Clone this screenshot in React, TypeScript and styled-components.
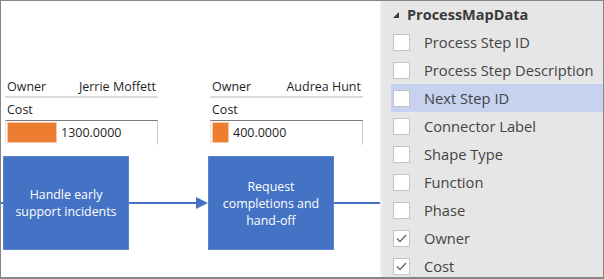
import styled, { createGlobalStyle } from 'styled-components';

const GlobalStyle = createGlobalStyle`
  html, body {
    margin: 0;
    padding: 0;
    background: #ffffff;
  }
  body {
    font-family: 'Open Sans', 'Noto Sans', sans-serif;
  }
`;

const BLUE = '#4472c4';

interface IStep {
  owner: string;
  cost: number;
  lines: string[];
}

const steps: IStep[] = [
  { owner: 'Jerrie Moffett', cost: 1300, lines: ['Handle early', 'support incidents'] },
  { owner: 'Audrea Hunt', cost: 400, lines: ['Request', 'completions and', 'hand-off'] }
];

const fields = [
  { label: 'Process Step ID', checked: false },
  { label: 'Process Step Description', checked: false },
  { label: 'Next Step ID', checked: false, selected: true },
  { label: 'Connector Label', checked: false },
  { label: 'Shape Type', checked: false },
  { label: 'Function', checked: false },
  { label: 'Phase', checked: false },
  { label: 'Owner', checked: true },
  { label: 'Cost', checked: true }
];

function DataGraphic({ step }: { step: IStep }) {
  // bar scaled against the largest cost in the map
  const barWidth = Math.round((step.cost / 1300) * 48);
  return (
    <StyledDataGraphic>
      <div className="owner-row">
        <span>Owner</span>
        <span>{step.owner}</span>
      </div>
      <div className="cost-label">Cost</div>
      <div className="cost-box">
        <div className="bar" style={{ width: barWidth }} />
        <span>{step.cost.toFixed(4)}</span>
      </div>
    </StyledDataGraphic>
  );
}

function Arrow() {
  return (
    <StyledConnector width="79" height="14" viewBox="0 0 79 14">
      <line x1="0" y1="7" x2="68" y2="7" stroke={BLUE} strokeWidth="2" />
      <polygon points="67,1 79,7 67,13" fill={BLUE} />
    </StyledConnector>
  );
}

function CheckBox({ checked }: { checked: boolean }) {
  return (
    <StyledCheckBox>
      {checked && (
        <svg width="11" height="9" viewBox="0 0 11 9">
          <polyline points="1,4.5 4,7.5 10,1" fill="none" stroke="#6b6b6b" strokeWidth="1.4" />
        </svg>
      )}
    </StyledCheckBox>
  );
}

export default function App() {
  return (
    <>
      <GlobalStyle />
      <Frame>
        <Canvas>
          <DataRow>
            {steps.map((s) => (
              <DataGraphic key={s.owner} step={s} />
            ))}
          </DataRow>
          <ShapeRow>
            <Stub />
            <Shape>
              {steps[0].lines.map((l) => (
                <div key={l}>{l}</div>
              ))}
            </Shape>
            <Arrow />
            <Shape>
              {steps[1].lines.map((l) => (
                <div key={l}>{l}</div>
              ))}
            </Shape>
            <Tail />
          </ShapeRow>
        </Canvas>
        <Panel>
          <PanelHeader>
            <svg width="6" height="6" viewBox="0 0 6 6">
              <polygon points="6,0 6,6 0,6" fill="#3c3c3c" />
            </svg>
            <span>ProcessMapData</span>
          </PanelHeader>
          {fields.map((f) => (
            <FieldRow key={f.label} $selected={!!f.selected}>
              <CheckBox checked={f.checked} />
              <span>{f.label}</span>
            </FieldRow>
          ))}
        </Panel>
      </Frame>
    </>
  );
}

const Frame = styled.div`
  width: 604px;
  height: 279px;
  box-sizing: border-box;
  border: 1px solid #868686;
  border-bottom-width: 2px;
  display: flex;
  overflow: hidden;
`;

const Canvas = styled.div`
  width: 379px;
  flex: none;
  background: #ffffff;
  display: flex;
  flex-direction: column;
  padding-top: 75px;
  box-sizing: border-box;
  overflow: hidden;
`;

const DataRow = styled.div`
  display: flex;
  gap: 52px;
  padding-left: 4px;
`;

const StyledDataGraphic = styled.div`
  width: 153px;
  font-size: 12.5px;
  color: #1f1f1f;
  .owner-row {
    height: 20px;
    display: flex;
    justify-content: space-between;
    align-items: center;
    padding: 0 2px;
    border-bottom: 2px solid #dadada;
  }
  .cost-label {
    height: 22px;
    line-height: 23px;
    padding-left: 2px;
  }
  .cost-box {
    height: 25px;
    box-sizing: border-box;
    border-top: 1px solid #7a7a7a;
    border-left: 1px solid #e2e2e2;
    border-right: 1px solid #c9c9c9;
    border-radius: 0 0 3px 3px;
    padding: 2px 2px 0 2px;
    display: flex;
    align-items: flex-start;
    gap: 5px;
    .bar {
      height: 19px;
      background: #ed7d31;
      box-shadow: 0 0 0 1px #f6c5a3;
    }
    span {
      line-height: 19px;
    }
  }
`;

const ShapeRow = styled.div`
  display: flex;
  align-items: center;
  margin-top: 11px;
`;

const Stub = styled.div`
  width: 2px;
  height: 2px;
  background: ${BLUE};
`;

const Shape = styled.div`
  width: 126px;
  height: 94px;
  flex: none;
  box-sizing: border-box;
  background: ${BLUE};
  border: 1px solid #5b84cc;
  color: #ffffff;
  font-size: 12.4px;
  line-height: 17px;
  display: flex;
  flex-direction: column;
  justify-content: center;
  align-items: center;
  text-align: center;
`;

const StyledConnector = styled.svg`
  flex: none;
  display: block;
`;

const Tail = styled.div`
  flex: 1;
  height: 2px;
  background: ${BLUE};
`;

const Panel = styled.div`
  flex: 1;
  background: #e6e6e6;
  border-left: 2px solid #efefef;
  box-sizing: border-box;
  font-family: 'Open Sans', 'Noto Sans', sans-serif;
`;

const PanelHeader = styled.div`
  height: 27px;
  display: flex;
  align-items: center;
  padding-left: 11px;
  gap: 8px;
  font-size: 14.5px;
  font-weight: 700;
  color: #3a3a3a;
  svg {
    margin-top: 1px;
  }
`;

const FieldRow = styled.div<{ $selected: boolean }>`
  height: 28px;
  margin-left: 9px;
  padding-left: 2px;
  display: flex;
  align-items: center;
  gap: 14px;
  font-size: 14.7px;
  color: #444444;
  background: ${({ $selected }) => ($selected ? '#c6d2ef' : 'transparent')};
`;

const StyledCheckBox = styled.div`
  width: 17px;
  height: 17px;
  box-sizing: border-box;
  flex: none;
  background: #ffffff;
  border: 1px solid #c4c4c4;
  display: flex;
  align-items: center;
  justify-content: center;
`;
